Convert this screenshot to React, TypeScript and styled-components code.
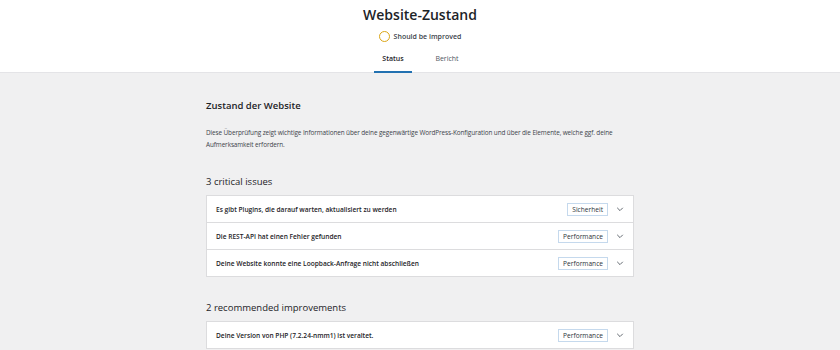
import styled, { createGlobalStyle } from "styled-components";

const GlobalStyle = createGlobalStyle`
    body {
        margin: 0;
        background: #f0f0f1;
        font-family: "Open Sans", "Noto Sans", sans-serif;
        color: #1d2327;
    }
`;

const Header = styled.header`
    background: #fff;
    height: 73px;
    box-sizing: border-box;
    display: flex;
    flex-direction: column;
    align-items: center;
    border-bottom: 1px solid #e4e4e7;
`;

const Title = styled.h1`
    margin: 5px 0 0;
    font-size: 14px;
    line-height: 19px;
    font-weight: 600;
`;

const StatusLine = styled.div`
    margin-top: 5px;
    display: flex;
    align-items: center;
    gap: 4px;
    font-size: 7px;
    font-weight: 600;
    color: #3c434a;
    height: 14px;
`;

const Ring = styled.span`
    width: 9px;
    height: 9px;
    border-radius: 50%;
    border: 1.5px solid #dba617;
`;

const Tabs = styled.nav`
    margin-top: auto;
    display: flex;
`;

const Tab = styled.div<{ $active?: boolean }>`
    width: 38px;
    margin: 0 8px;
    text-align: center;
    font-size: 7px;
    font-weight: ${(p) => (p.$active ? 600 : 400)};
    color: ${(p) => (p.$active ? "#1d2327" : "#50575e")};
    padding-bottom: 8px;
    border-bottom: 2px solid ${(p) => (p.$active ? "#2271b1" : "transparent")};
    margin-bottom: -1px;
`;

const Content = styled.main`
    width: 428px;
    margin: 0 auto;
    padding-top: 26px;
`;

const Heading = styled.h2`
    margin: 0;
    font-size: 9.5px;
    line-height: 14px;
    font-weight: 600;
`;

const Description = styled.p`
    margin: 14px 0 0;
    font-size: 6.4px;
    letter-spacing: -0.1px;
    line-height: 12px;
    color: #3c434a;
`;

const GroupTitle = styled.h3<{ $gap?: number }>`
    margin: ${(p) => p.$gap ?? 24}px 0 0;
    font-size: 9.5px;
    line-height: 14px;
    font-weight: 400;
`;

const Group = styled.div`
    margin-top: 6px;
    background: #fff;
    border: 1px solid #dcdcde;
`;

const Row = styled.div`
    height: 26px;
    display: flex;
    align-items: center;
    padding: 0 9px;
    font-size: 6.6px;
    font-weight: 600;
    & + & {
        border-top: 1px solid #dcdcde;
    }
`;

const RowLabel = styled.span`
    flex: 1;
`;

const Badge = styled.span`
    border: 1px solid #c5d9ed;
    padding: 0 4px;
    height: 11px;
    line-height: 11px;
    font-size: 6.6px;
    font-weight: 400;
    color: #2c3338;
`;

const Chevron = styled.svg`
    width: 8px;
    height: 8px;
    margin-left: 8px;
`;

const critical = [
    { label: "Es gibt Plugins, die darauf warten, aktualisiert zu werden", tag: "Sicherheit" },
    { label: "Die REST-API hat einen Fehler gefunden", tag: "Performance" },
    { label: "Deine Website konnte eine Loopback-Anfrage nicht abschließen", tag: "Performance" },
];

const recommended = [
    { label: "Deine Version von PHP (7.2.24-nmm1) ist veraltet.", tag: "Performance" },
];

function IssueRow({ label, tag }: { label: string; tag: string }) {
    return (
        <Row>
            <RowLabel>{label}</RowLabel>
            <Badge>{tag}</Badge>
            <Chevron viewBox="0 0 10 10">
                <path d="M1.5 3.5 L5 7 L8.5 3.5" fill="none" stroke="#50575e" strokeWidth="1.1" />
            </Chevron>
        </Row>
    );
}

function App() {
    return (
        <>
            <GlobalStyle />
            <Header>
                <Title>Website-Zustand</Title>
                <StatusLine>
                    <Ring />
                    Should be improved
                </StatusLine>
                <Tabs>
                    <Tab $active>Status</Tab>
                    <Tab>Bericht</Tab>
                </Tabs>
            </Header>
            <Content>
                <Heading>Zustand der Website</Heading>
                <Description>
                    Diese Überprüfung zeigt wichtige Informationen über deine gegenwärtige WordPress-Konfiguration und über die Elemente, welche ggf. deine Aufmerksamkeit erfordern.
                </Description>
                <GroupTitle>3 critical issues</GroupTitle>
                <Group>
                    {critical.map((c) => (
                        <IssueRow key={c.label} {...c} />
                    ))}
                </Group>
                <GroupTitle $gap={24}>2 recommended improvements</GroupTitle>
                <Group>
                    {recommended.map((c) => (
                        <IssueRow key={c.label} {...c} />
                    ))}
                </Group>
            </Content>
        </>
    );
}

export default App;
